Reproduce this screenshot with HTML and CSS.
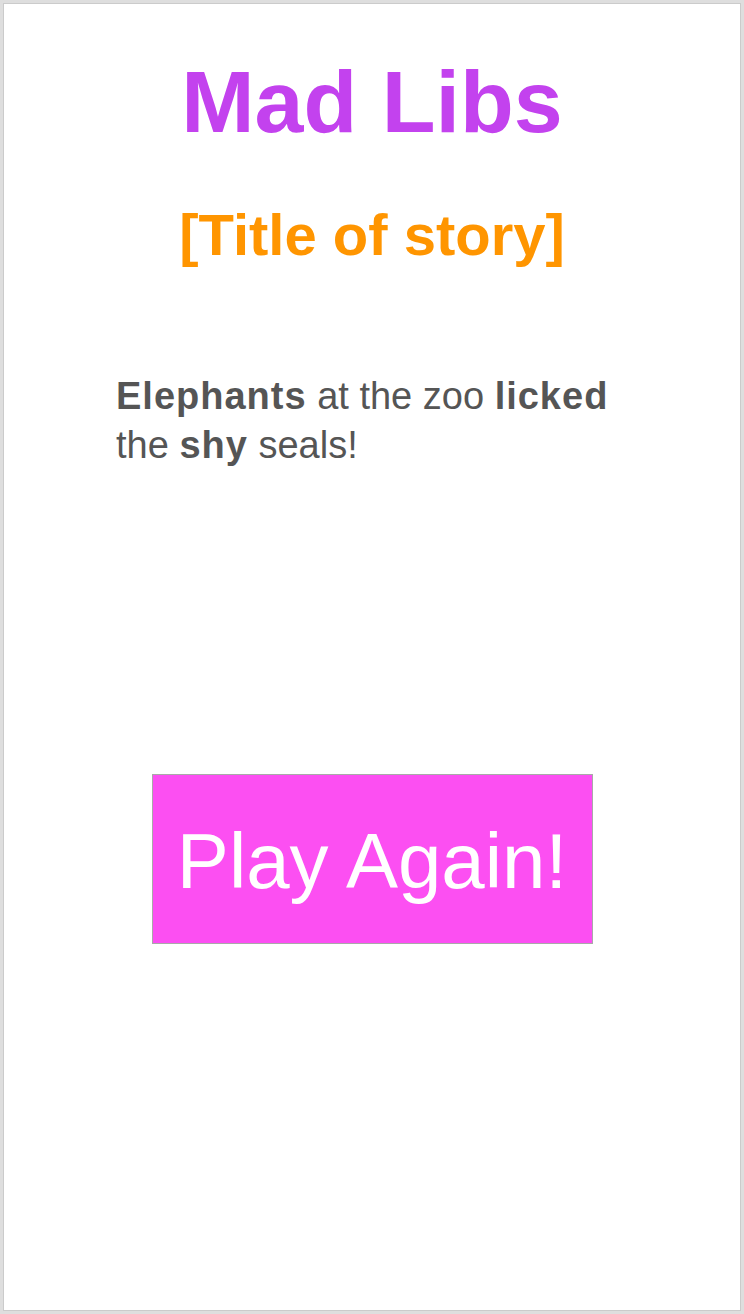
FILE: index.html
```html
<!DOCTYPE html>
<html lang="en">
<head>
<meta charset="utf-8">
<title>Mad Libs</title>
<link rel="stylesheet" href="styles.css">
</head>
<body>
<div class="frame">
  <div class="screen">
    <h1 class="title">Mad Libs</h1>
    <h2 class="story-title">[Title of story]</h2>
    <p class="story"><b>Elephants</b> at the zoo <b>licked</b> the <b>shy</b> seals!</p>
    <div class="actions">
      <button class="play-again">Play Again!</button>
    </div>
  </div>
</div>
</body>
</html>
```

FILE: styles.css
```css
html, body {
  margin: 0;
  padding: 0;
  background: #ffffff;
}

body {
  font-family: "Liberation Sans", Arial, Helvetica, sans-serif;
}

.frame {
  box-sizing: border-box;
  width: 744px;
  height: 1314px;
  border: 3px solid #dedede;
}

.screen {
  box-sizing: border-box;
  height: 100%;
  border: 1px solid #cbcbcb;
  background: #ffffff;
  display: flex;
  flex-direction: column;
  align-items: center;
  padding-top: 48px;
}

.title {
  margin: 0;
  font-size: 88px;
  line-height: 100px;
  font-weight: 700;
  color: #c342ee;
  text-align: center;
}

.story-title {
  margin: 51px 0 0;
  font-size: 58px;
  line-height: 64px;
  font-weight: 700;
  color: #ff9500;
  text-align: center;
}

.story {
  align-self: stretch;
  margin: 105px 0 0;
  padding: 0 106px 0 112px;
  font-size: 38px;
  line-height: 49px;
  color: #555555;
}

.story b {
  font-weight: 700;
  letter-spacing: 1px;
}

.actions {
  margin-top: 304px;
  display: flex;
  justify-content: center;
  align-self: stretch;
}

.play-again {
  box-sizing: border-box;
  width: 441px;
  height: 170px;
  margin: 0;
  padding: 5px 0 0;
  border: 1px solid #a9a9a9;
  background: #fc4ff2;
  color: #ffffff;
  font-family: "Liberation Sans", Arial, Helvetica, sans-serif;
  font-size: 78px;
  font-weight: 400;
  display: flex;
  align-items: center;
  justify-content: center;
}
```
